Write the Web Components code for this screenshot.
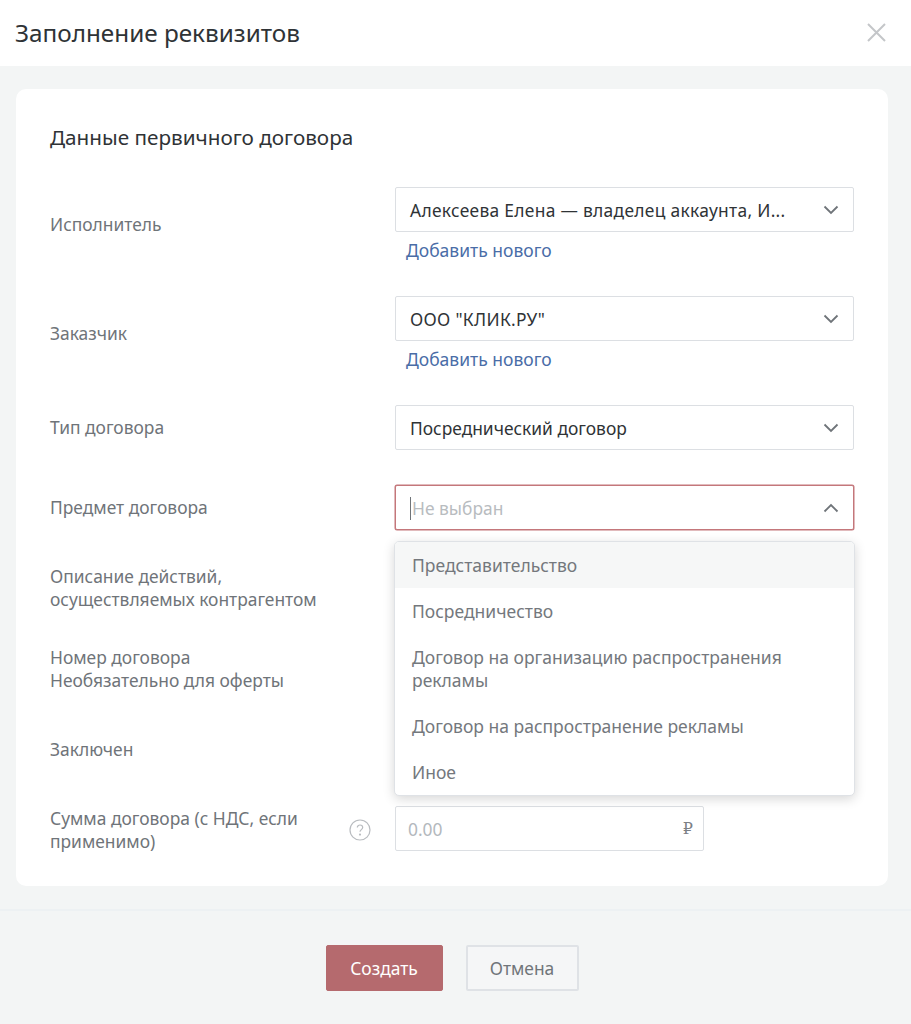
<!DOCTYPE html>
<html lang="ru">
<head>
<meta charset="utf-8">
<title>Заполнение реквизитов</title>
<style>
  html, body { margin: 0; padding: 0; }
  body { font-family: "Noto Sans", "Open Sans", sans-serif; background: #f3f5f5; }
</style>
</head>
<body>
<req-dialog heading="Заполнение реквизитов">
  <form-card heading="Данные первичного договора">
    <form-row label="Исполнитель">
      <select-box style="--ls:.3px" value="Алексеева Елена — владелец аккаунта, И..."></select-box>
      <a slot="after" href="#">Добавить нового</a>
    </form-row>
    <form-row label="Заказчик">
      <select-box style="--ls:.3px" value='ООО "КЛИК.РУ"'></select-box>
      <a slot="after" href="#">Добавить нового</a>
    </form-row>
    <form-row label="Тип договора">
      <select-box value="Посреднический договор"></select-box>
    </form-row>
    <form-row label="Предмет договора">
      <select-box placeholder="Не выбран" open>
        <drop-item active>Представительство</drop-item>
        <drop-item>Посредничество</drop-item>
        <drop-item>Договор на организацию распространения рекламы</drop-item>
        <drop-item>Договор на распространение рекламы</drop-item>
        <drop-item>Иное</drop-item>
      </select-box>
    </form-row>
    <form-row label="Описание действий, осуществляемых контрагентом">
      <select-box></select-box>
    </form-row>
    <form-row label="Номер договора
Необязательно для оферты">
      <select-box></select-box>
    </form-row>
    <form-row label="Заключен">
      <select-box></select-box>
    </form-row>
    <form-row label="Сумма договора (с НДС, если применимо)" help>
      <money-input placeholder="0.00"></money-input>
    </form-row>
  </form-card>
</req-dialog>

<script>
class ReqDialog extends HTMLElement {
  constructor() {
    super();
    this.attachShadow({ mode: 'open' });
    this.shadowRoot.innerHTML = `
      <style>
        :host { display: flex; flex-direction: column; height: 1024px; background: #f3f5f5; color: #333; }
        header { height: 66px; flex: none; background: #fff; display: flex; align-items: center; justify-content: space-between; padding: 0 25px 0 15px; }
        h1 { margin: 0 0 2px; font-size: 24.3px; font-weight: 400; color: #2f3336; }
        .close { width: 19px; height: 19px; display: block; margin-bottom: 2px; }
        main { flex: none; padding: 23px 23px 23px 16px; }
        footer { border-top: 2px solid #edf1f3; display: flex; justify-content: center; gap: 23px; padding: 34px 7px 0 0; }
        button { font: inherit; font-size: 17.4px; height: 46px; border-radius: 2px; box-sizing: border-box; }
        .ok { width: 117px; background: #b56a6e; color: #fff; border: 1px solid #b56a6e; }
        .no { width: 113px; background: #f5f6f7; color: #70757a; border: 2px solid #dfe2e6; }
      </style>
      <header>
        <h1></h1>
        <svg class="close" viewBox="0 0 19 19" fill="none" stroke="#c4c6c9" stroke-width="2"><path d="M1 1l17 17M18 1L1 18"/></svg>
      </header>
      <main><slot></slot></main>
      <footer><button class="ok">Создать</button><button class="no">Отмена</button></footer>`;
  }
  connectedCallback() {
    this.shadowRoot.querySelector('h1').textContent = this.getAttribute('heading');
  }
}

class FormCard extends HTMLElement {
  constructor() {
    super();
    this.attachShadow({ mode: 'open' });
    this.shadowRoot.innerHTML = `
      <style>
        :host { display: block; background: #fff; border-radius: 10px; padding: 33px 34px 34px 34px; }
        h2 { margin: 0 0 35px; font-size: 20.7px; line-height: 30px; font-weight: 400; color: #2f3336; }
        .rows { display: flex; flex-direction: column; gap: 35px; }
      </style>
      <h2></h2>
      <div class="rows"><slot></slot></div>`;
  }
  connectedCallback() {
    this.shadowRoot.querySelector('h2').textContent = this.getAttribute('heading');
  }
}

class FormRow extends HTMLElement {
  constructor() {
    super();
    this.attachShadow({ mode: 'open' });
    this.shadowRoot.innerHTML = `
      <style>
        :host { display: grid; grid-template-columns: 345px 459px; align-items: center; }
        :host(:last-child) { margin-top: -1px; }
        :host(:last-child) .label { padding-top: 1px; margin-bottom: -1px; }
        :host(:last-child) .ctl { align-self: start; }
        .label { display: flex; align-items: center; justify-content: space-between; padding-right: 24px; font-size: 17.4px; line-height: 23px; color: #6f7479; }
        .label span { max-width: 290px; white-space: pre-line; }
        .help { width: 22px; height: 22px; flex: none; display: none; }
        :host([help]) .help { display: block; }
        .ctl ::slotted(a) { display: block; margin: 7px 0 0 11px; font-size: 17.5px; line-height: 22px; color: #4a6da7; text-decoration: none; }
      </style>
      <div class="label">
        <span></span>
        <svg class="help" viewBox="0 0 22 22" fill="none" stroke="#b9bcc0" stroke-width="1.2">
          <circle cx="11" cy="11" r="10"/>
          <path d="M8.3 8.6c0-1.6 1.2-2.6 2.7-2.6s2.7 1 2.7 2.4c0 2.2-2.7 2.2-2.7 4.4"/>
          <circle cx="11" cy="15.6" r=".5"/>
        </svg>
      </div>
      <div class="ctl"><slot></slot><slot name="after"></slot></div>`;
  }
  connectedCallback() {
    this.shadowRoot.querySelector('.label span').textContent = this.getAttribute('label');
  }
}

class SelectBox extends HTMLElement {
  constructor() {
    super();
    this.attachShadow({ mode: 'open' });
    this.shadowRoot.innerHTML = `
      <style>
        :host { display: block; position: relative; height: 45px; }
        .box { height: 45px; box-sizing: border-box; border: 1px solid #dcdfe3; border-radius: 2px; background: #fff; display: flex; align-items: center; justify-content: space-between; padding: 0 14px 0 14px; font-size: 17.4px; letter-spacing: var(--ls, 0); color: #2f3336; white-space: nowrap; }
        .ph { color: #b8bcc0; }
        :host([open]) .box { border-color: #c4777b; box-shadow: 0 0 0 .5px #c4777b; }
        :host([open]) .val { border-left: 1px solid #6f7479; padding-left: 1px; line-height: 23px; margin-top: 1px; }
        svg { width: 16px; height: 10px; flex: none; }
        :host([open]) svg { transform: rotate(180deg); }
        .drop { display: none; position: absolute; left: -1px; right: -1px; top: 56px; z-index: 5; background: #fff; border: 1px solid #dfe2e6; border-radius: 5px; box-shadow: 0 3px 12px rgba(0,0,0,.16); overflow: hidden; letter-spacing: 0; }
        :host([open]) .drop { display: block; }
      </style>
      <div class="box">
        <span class="val"></span>
        <svg viewBox="0 0 16 10" fill="none" stroke="#6f7479" stroke-width="1.8"><path d="M1.5 1.5L8 8l6.5-6.5"/></svg>
      </div>
      <div class="drop"><slot></slot></div>`;
  }
  connectedCallback() {
    const val = this.shadowRoot.querySelector('.val');
    if (this.hasAttribute('placeholder')) {
      val.textContent = this.getAttribute('placeholder');
      val.classList.add('ph');
    } else {
      val.textContent = this.getAttribute('value') || '';
    }
  }
}

class DropItem extends HTMLElement {
  constructor() {
    super();
    this.attachShadow({ mode: 'open' });
    this.shadowRoot.innerHTML = `
      <style>
        :host { display: block; padding: 12px 17px 11px; font-size: 17.5px; line-height: 23px; color: #74787d; }
        :host([active]) { background: #f6f7f7; }
      </style>
      <slot></slot>`;
  }
}

class MoneyInput extends HTMLElement {
  constructor() {
    super();
    this.attachShadow({ mode: 'open' });
    this.shadowRoot.innerHTML = `
      <style>
        :host { display: flex; width: 309px; height: 45px; box-sizing: border-box; border: 1px solid #dcdfe3; border-radius: 2px; background: #fff; align-items: center; justify-content: space-between; padding: 0 10px 0 12px; font-size: 17.4px; }
        .ph { color: #b3b8bd; }
        .cur { color: #7c8085; font-family: "DejaVu Serif", serif; font-size: 16px; }
      </style>
      <span class="ph"></span><span class="cur">₽</span>`;
  }
  connectedCallback() {
    this.shadowRoot.querySelector('.ph').textContent = this.getAttribute('placeholder');
  }
}

customElements.define('req-dialog', ReqDialog);
customElements.define('form-card', FormCard);
customElements.define('form-row', FormRow);
customElements.define('select-box', SelectBox);
customElements.define('drop-item', DropItem);
customElements.define('money-input', MoneyInput);
</script>
</body>
</html>
